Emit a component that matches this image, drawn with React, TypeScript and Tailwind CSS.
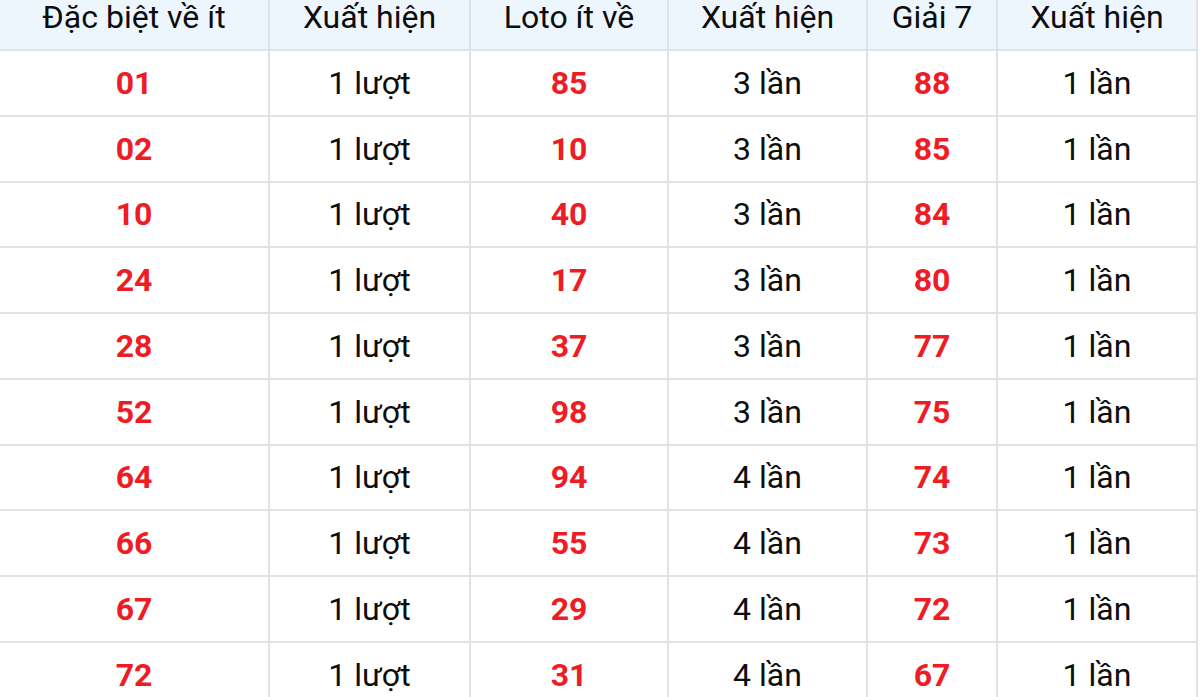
import React from "react";

const rows: [string, string, string, string, string, string][] = [
  ["01", "1 lượt", "85", "3 lần", "88", "1 lần"],
  ["02", "1 lượt", "10", "3 lần", "85", "1 lần"],
  ["10", "1 lượt", "40", "3 lần", "84", "1 lần"],
  ["24", "1 lượt", "17", "3 lần", "80", "1 lần"],
  ["28", "1 lượt", "37", "3 lần", "77", "1 lần"],
  ["52", "1 lượt", "98", "3 lần", "75", "1 lần"],
  ["64", "1 lượt", "94", "4 lần", "74", "1 lần"],
  ["66", "1 lượt", "55", "4 lần", "73", "1 lần"],
  ["67", "1 lượt", "29", "4 lần", "72", "1 lần"],
  ["72", "1 lượt", "31", "4 lần", "67", "1 lần"],
];

const headers = ["Đặc biệt về ít", "Xuất hiện", "Loto ít về", "Xuất hiện", "Giải 7", "Xuất hiện"];

const gridCols = "grid grid-cols-[270px_201px_198px_199px_130px_200px]";

export default function App() {
  return (
    <div
      className="w-[1200px] h-[697px] overflow-hidden bg-white text-[32px] leading-[32px] text-[#0d0d0d]"
      style={{ fontFamily: "Roboto, 'Liberation Sans', sans-serif" }}
    >
      <div className={gridCols}>
        {headers.map((h, i) => (
          <div
            key={i}
            className="h-[51px] pt-[1px] flex justify-center items-start bg-[#eef6fd] border-b-2 border-r-2 border-[#dfe2e7] whitespace-nowrap"
          >
            {h}
          </div>
        ))}
      </div>
      {rows.map((r, ri) => (
        <div key={ri} className={gridCols}>
          {r.map((c, ci) => (
            <div
              key={ci}
              className={
                ci % 2 === 0
                  ? "h-[65.75px] flex justify-center items-center border-b-2 border-r-2 border-[#dfe2e7] font-bold text-[#ee1c25]"
                  : "h-[65.75px] flex justify-center items-center border-b-2 border-r-2 border-[#dfe2e7]"
              }
            >
              {c}
            </div>
          ))}
        </div>
      ))}
    </div>
  );
}
